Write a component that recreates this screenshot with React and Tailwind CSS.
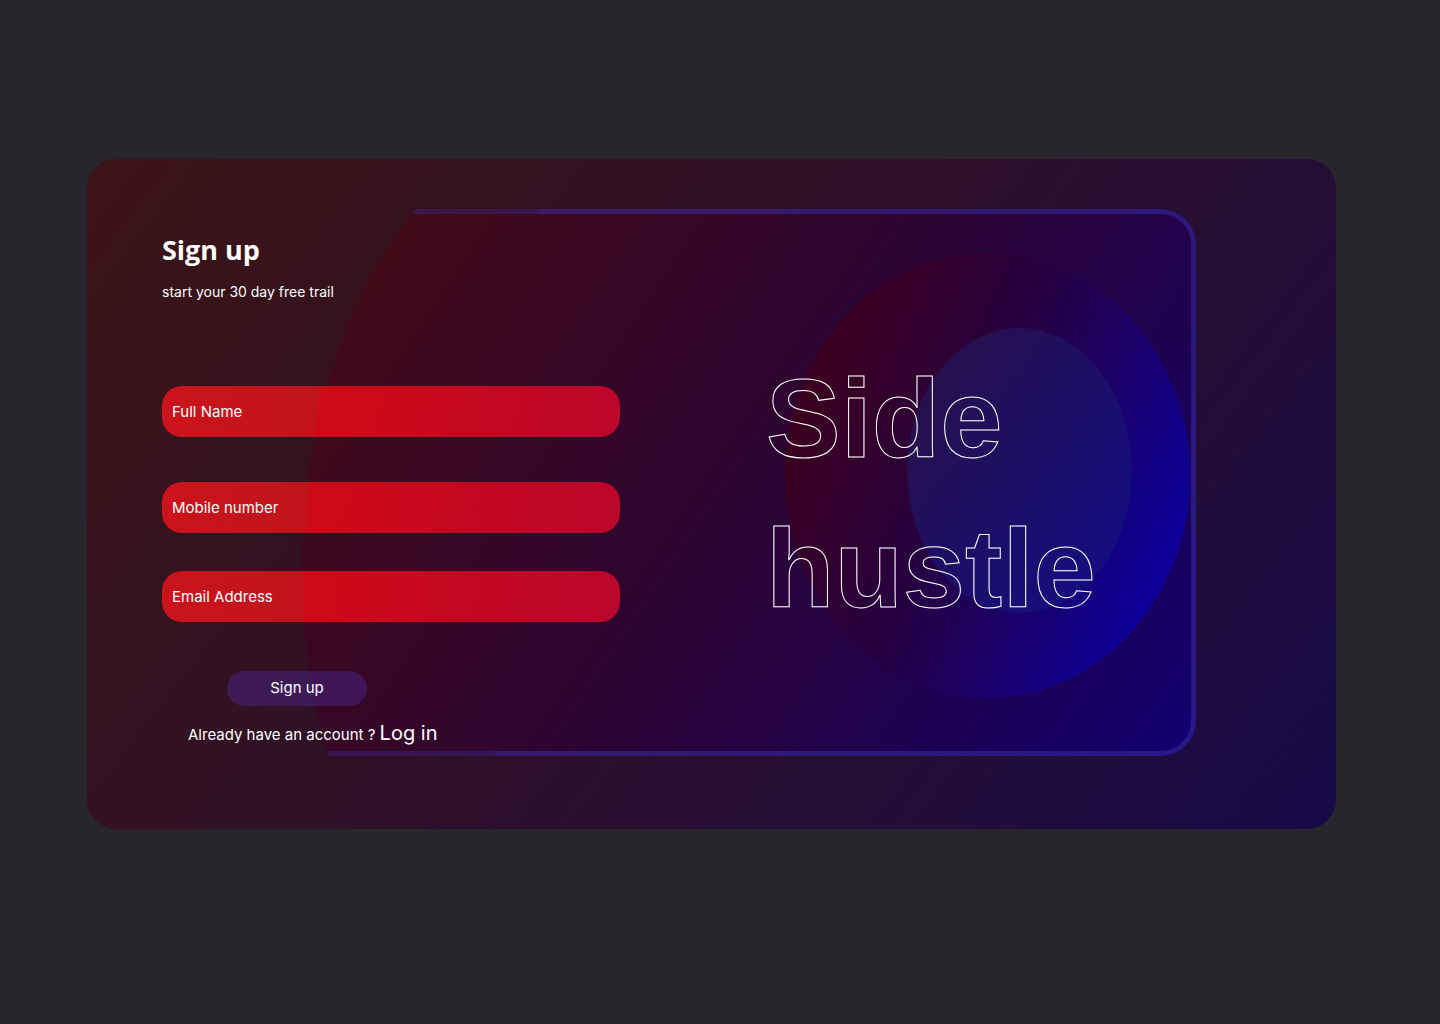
import React from 'react';

const fields = [
  {
    id: 'fullName',
    label: 'Full Name',
    type: 'text',
    spacing: 'mb-[45px]',
    fill: 'bg-[linear-gradient(98deg,#fd141b,#f0141c_34%,#ff0a14_34%,#e9072b)]',
  },
  {
    id: 'mobile',
    label: 'Mobile number',
    type: 'tel',
    spacing: 'mb-[38px]',
    fill: 'bg-[linear-gradient(92deg,#fd141b,#f0141c_32%,#ff0a14_32%,#e9072b)]',
  },
  {
    id: 'email',
    label: 'Email Address',
    type: 'email',
    spacing: 'mb-[49px]',
    fill: 'bg-[linear-gradient(90deg,#fd141b,#f0141c_31%,#ff0a14_31%,#e9072b)]',
  },
];

function Backdrop() {
  return (
    <div
      aria-hidden="true"
      className="col-start-1 row-start-1 mt-[50px] mb-[73px] ml-[215px] mr-[140px] flex [clip-path:path('M114_0A315_467_0_0_0_26_547H2000V0Z')]"
    >
      <div className="relative flex-1 overflow-hidden rounded-r-[35px] bg-linear-[124deg,#420a18_8%,#2e0430_48%,#1d0153_78%,#110070]">
        <div className="absolute top-[44px] right-[6px] h-[445px] w-[405px] rounded-[50%] bg-linear-[114deg,#3b0020_15%,#27003f_44%,#1b0068_64%,#0d0096_85%]" />
        <div className="absolute top-[119px] right-16 h-[285px] w-[225px] rounded-[50%] bg-linear-[125deg,#28104a_10%,#1e0f62_45%,#120d86_95%]" />
        {/* Border, brighter to the right of the inner arc */}
        <div className="absolute inset-0 rounded-r-[35px] border-[5px] border-l-0 border-[#3d3090]/40" />
        <div className="absolute inset-0 rounded-r-[35px] border-[5px] border-l-0 border-[#3d30c8]/20 [clip-path:path('M239_0A300_409_0_0_0_194_547H2000V0Z')]" />
      </div>
    </div>
  );
}

function SignUpForm() {
  return (
    <form className="w-[458px] shrink-0" onSubmit={(e) => e.preventDefault()}>
      <h1 className="font-['Open_Sans',sans-serif] text-[27px] leading-8 font-bold">Sign up</h1>
      <p className="mt-[14px] mb-[82px] text-sm leading-6">start your 30 day free trail</p>

      {fields.map((field) => (
        <div
          key={field.id}
          className={field.spacing}
        >
          {/* Fill sits under the text so only the colour is translucent */}
          <div className="grid">
            <span className={`col-start-1 row-start-1 rounded-[20px] opacity-75 ${field.fill}`} />
            <input
              id={field.id}
              type={field.type}
              aria-label={field.label}
              placeholder={field.label}
              className="relative col-start-1 row-start-1 h-[51px] w-full rounded-[20px] bg-transparent px-[10px] text-[15px] text-white placeholder:text-white"
            />
          </div>
        </div>
      ))}

      <button
        type="submit"
        className="ml-[65px] block h-[35px] w-[140px] rounded-full bg-[#4d2aa0]/40 text-[15px]"
      >
        Sign up
      </button>
      <p className="mt-[13px] ml-[26px] text-[15px] leading-7">
        Already have an account ?{' '}
        <a href="#login" className="text-xl leading-7">
          Log in
        </a>
      </p>
    </form>
  );
}

export default function App() {
  return (
    <main className="min-h-screen bg-[#28262c] pt-[159px] pr-[104px] pb-12 pl-[87px] font-['Inter',sans-serif] text-white">
      <div className="grid overflow-hidden rounded-[29px] bg-linear-[128deg,#3d1416,#321122_32%,#260e34_68%,#170a49]">
        <Backdrop />

        <div className="relative col-start-1 row-start-1 flex pt-[75px] pb-20 pl-[75px]">
          <SignUpForm />
          <h2 className="mt-[110px] ml-[146px] font-['Liberation_Sans',sans-serif] text-[112px] leading-[150px] font-bold text-transparent [-webkit-text-stroke:1px_white]">
            Side
            <br />
            hustle
          </h2>
        </div>
      </div>
    </main>
  );
}
